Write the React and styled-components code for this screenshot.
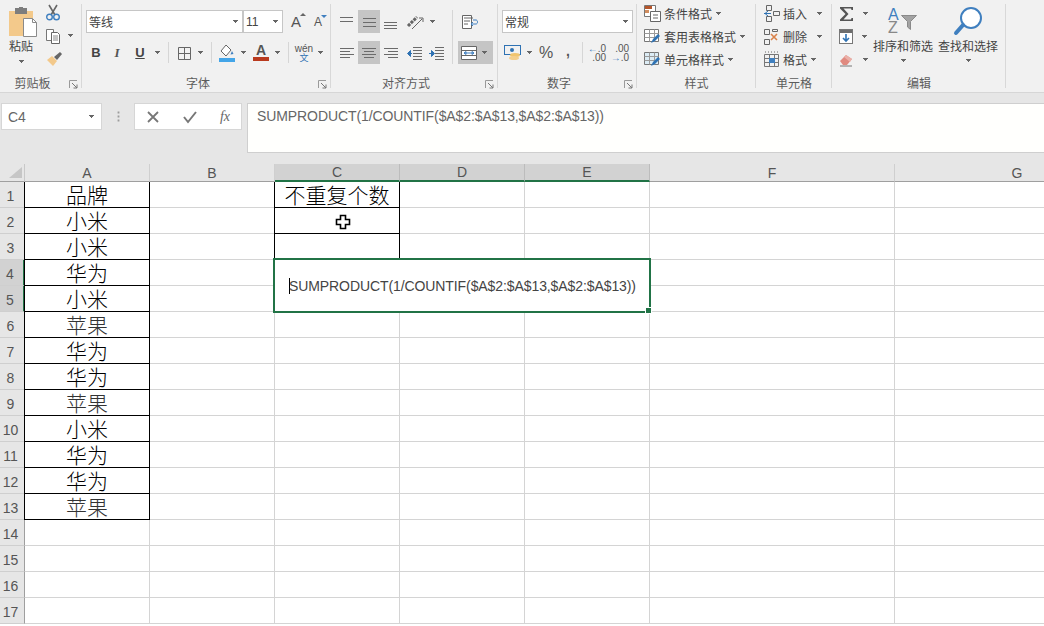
import styled, { createGlobalStyle } from "styled-components";

const Global = createGlobalStyle`
  html, body {
    margin: 0;
    padding: 0;
    overflow: hidden;
    background: #fff;
  }
  * { box-sizing: border-box; }
`;

const cjk = `"Noto Sans CJK SC", "Liberation Sans", sans-serif`;
const latin = `"Liberation Sans", "Noto Sans CJK SC", sans-serif`;

const Page = styled.div`
  width: 1044px;
  height: 626px;
  overflow: hidden;
  display: flex;
  flex-direction: column;
  font-family: ${cjk};
`;

const Ribbon = styled.div`
  display: flex;
  height: 93px;
  flex: none;
  background: #f1f1f1;
  border-bottom: 1px solid #d6d6d6;
`;

const Group = styled.section`
  position: relative;
  display: flex;
  flex-direction: column;
  width: ${(p) => p.$w}px;
  height: 90px;
  padding-left: ${(p) => p.$left ?? 4}px;
  &::after {
    content: "";
    position: absolute;
    right: 0;
    top: 4px;
    bottom: 2px;
    width: 1px;
    background: #d8d8d8;
  }
`;

const Body = styled.div`
  flex: 1;
  display: flex;
  padding-top: ${(p) => p.$top ?? 10}px;
`;

const Label = styled.div`
  height: 14px;
  margin-left: -${(p) => p.$left ?? 4}px;
  padding-right: ${(p) => (p.$launcher ? 17 : 0)}px;
  font-size: 12px;
  line-height: 14px;
  text-align: center;
  color: #5c5c5c;
`;

const Launcher = styled.svg`
  position: absolute;
  right: 4px;
  bottom: 1px;
  width: 9px;
  height: 9px;
`;

const Stack = styled.div`
  display: flex;
  flex-direction: column;
  gap: ${(p) => p.$gap ?? 8}px;
  ${(p) => (p.$w ? `width: ${p.$w}px;` : "")}
`;

const Row = styled.div`
  display: flex;
  align-items: center;
  height: 23px;
`;

const Combo = styled.div`
  display: flex;
  align-items: center;
  justify-content: space-between;
  width: ${(p) => p.$w}px;
  height: 23px;
  padding: 0 4px 0 2px;
  background: #fff;
  border: 1px solid #c6c6c6;
  font-size: 12px;
  color: #444;
  font-family: ${(p) => (p.$latin ? latin : cjk)};
`;

const Btn = styled.div`
  display: flex;
  align-items: center;
  justify-content: ${(p) => (p.$start ? "flex-start" : "center")};
  flex: none;
  width: ${(p) => p.$w}px;
  height: 23px;
  padding-left: ${(p) => (p.$start ? 3 : 0)}px;
  color: #555;
  background: ${(p) => (p.$on ? "#c5c5c5" : "transparent")};
`;

const BoldText = styled.span`
  font: bold 13px ${latin};
  color: #444;
`;

const ItalicText = styled.span`
  font: italic bold 13px "Liberation Serif", serif;
  color: #555;
`;

const UnderText = styled.span`
  font: bold 13px ${latin};
  color: #444;
  text-decoration: underline;
`;

const GrowA = styled.span`
  position: relative;
  font: ${(p) => p.$size}px ${latin};
  color: #555;
`;

const Tick = styled.i`
  position: absolute;
  top: 0;
  right: -5px;
  border-left: 3px solid transparent;
  border-right: 3px solid transparent;
  ${(p) => (p.$down ? "border-top: 3px solid #3f7fbf;" : "border-bottom: 3px solid #666;")}
`;

const ColorA = styled.span`
  display: flex;
  flex-direction: column;
  align-items: center;
  font: bold 14px/13px ${latin};
  color: #555;
  &::after {
    content: "";
    width: 16px;
    height: 4px;
    background: #b93a1e;
  }
`;

const Wen = styled.span`
  display: flex;
  flex-direction: column;
  align-items: center;
  font: 10px/9px ${latin};
  color: #555;
  & b {
    font: 9px/9px ${cjk};
    color: #2f72b3;
  }
`;

const Percent = styled.span`
  font: 16px ${latin};
  color: #555;
`;

const Comma = styled.span`
  font: bold 14px ${latin};
  color: #555;
  margin-top: -4px;
`;

const Decimal = styled.span`
  display: flex;
  flex-direction: column;
  align-items: flex-end;
  font: 10px/9px ${latin};
  color: #555;
  & em {
    font-style: normal;
    color: #3f7fbf;
  }
`;

const Sep = styled.div`
  flex: none;
  width: ${(p) => p.$w}px;
  height: ${(p) => p.$h ?? 21}px;
  background: linear-gradient(#d6d6d6, #d6d6d6) center / 1px 100% no-repeat;
`;

const Caret = styled.i`
  display: block;
  flex: none;
  width: ${(p) => p.$w ?? 10}px;
  height: 3px;
  background: linear-gradient(#666, #666) center top / 5px 1px no-repeat,
    linear-gradient(#666, #666) center 1px / 3px 1px no-repeat,
    linear-gradient(#666, #666) center 2px / 1px 1px no-repeat;
`;

const PasteBtn = styled.div`
  display: flex;
  flex-direction: column;
  align-items: center;
  width: 26px;
  margin-right: 11px;
  font-size: 12px;
  line-height: 18px;
  color: #444;
  & > svg {
    align-self: flex-start;
  }
  & > i {
    margin-top: 5px;
  }
`;

const SmallStack = styled.div`
  display: flex;
  flex-direction: column;
  margin-top: -6px;
`;

const ToolRow = styled.div`
  display: flex;
  align-items: center;
  height: 23px;
  font-size: 12px;
  color: #444;
  & > svg {
    flex: none;
    margin-right: 3px;
  }
  & > i {
    margin-left: ${(p) => p.$caret ?? 3}px;
  }
`;

const BigBtn = styled.div`
  display: flex;
  flex-direction: column;
  align-items: center;
  width: 60px;
  margin-top: 2px;
  margin-left: ${(p) => p.$gap ?? 0}px;
  font-size: 12px;
  line-height: 16px;
  color: #444;
  white-space: nowrap;
  & > svg {
    height: 32px;
    margin-bottom: 2px;
  }
  & > i {
    margin-top: 5px;
  }
`;

const FormulaBar = styled.div`
  display: flex;
  align-items: flex-start;
  flex: none;
  height: 71px;
  padding: 10px 0 0 1px;
  background: #e6e6e6;
`;

const NameBox = styled.div`
  display: flex;
  align-items: center;
  justify-content: space-between;
  width: 101px;
  height: 27px;
  padding: 0 6px;
  background: #fff;
  border: 1px solid #d6d6d6;
  font: 14px ${latin};
  color: #666;
`;

const Dots = styled.div`
  width: 32px;
  height: 27px;
  background: radial-gradient(circle, #9c9c9c 1px, transparent 1.2px) center / 3px 4px repeat-y;
  background-size: 3px 4px;
  background-clip: content-box;
  padding: 8px 0;
`;

const FxBox = styled.div`
  display: flex;
  align-items: center;
  justify-content: space-between;
  width: 108px;
  height: 27px;
  padding: 0 11px;
  margin-right: 5px;
  background: #fff;
  border: 1px solid #d6d6d6;
`;

const FxText = styled.span`
  font: italic 14px "Liberation Serif", serif;
  color: #666;
`;

const FormulaInput = styled.div`
  flex: 1;
  height: 50px;
  padding: 3px 9px;
  background: #fffffd;
  border: 1px solid #cfcfcf;
  border-right: none;
  font: 14px/18px ${latin};
  letter-spacing: -0.09px;
  color: #666;
`;

const Sheet = styled.div`
  position: relative;
  flex: 1;
  display: grid;
  grid-template-columns: 25px 125px 125px 125px 125px 125px 245px 245px;
  grid-template-rows: 18px repeat(17, 26px);
  background: #fff;
`;

const Corner = styled.div`
  display: flex;
  align-items: flex-end;
  justify-content: flex-end;
  padding: 0 2px 3px 0;
  background: #e6e6e6;
  border-bottom: 1px solid #9f9f9f;
  border-right: 1px solid #c8c8c8;
`;

const ColHead = styled.div`
  display: flex;
  align-items: center;
  justify-content: center;
  background: ${(p) => (p.$on ? "#d2d2d2" : "#e6e6e6")};
  border-right: 1px solid ${(p) => (p.$on ? "#bcbcbc" : "#cfcfcf")};
  border-bottom: ${(p) => (p.$on ? "2px solid #217346" : "1px solid #9f9f9f")};
  font: 14px ${latin};
  color: #555;
`;

const RowHead = styled.div`
  display: flex;
  align-items: center;
  justify-content: center;
  padding: 2px 3px 0 0;
  background: ${(p) => (p.$on ? "#d2d2d2" : "#e6e6e6")};
  border-right: ${(p) => (p.$on ? "2px solid #217346" : "1px solid #9f9f9f")};
  border-bottom: 1px solid #cfcfcf;
  font: 14px ${latin};
  color: #555;
`;

const Cell = styled.div`
  display: flex;
  align-items: center;
  justify-content: center;
  padding-bottom: 2px;
  border-right: 1px solid ${(p) => (p.$box ? "#000" : "#d4d4d4")};
  border-bottom: 1px solid ${(p) => (p.$box ? "#000" : "#d4d4d4")};
  box-shadow: ${(p) => (p.$box ? "-1px 0 0 #000" : "none")};
  font-size: 21px;
  font-weight: 300;
  line-height: 24px;
  color: ${(p) => p.$color ?? "#000"};
  white-space: nowrap;
`;

const Editor = styled.div`
  position: absolute;
  left: 273px;
  top: 94px;
  width: 378px;
  height: 55px;
  display: flex;
  align-items: center;
  padding-left: 14px;
  background: #fff;
  border: 2px solid #217346;
  font: 14px ${latin};
  letter-spacing: -0.09px;
  color: #444;
  &::after {
    content: "";
    position: absolute;
    right: -3px;
    bottom: -3px;
    width: 5px;
    height: 5px;
    background: #217346;
    border: 1px solid #fff;
  }
`;

const TextCaret = styled.span`
  width: 1px;
  height: 16px;
  margin-right: -1px;
  background: #000;
`;

const Pointer = styled.svg`
  position: absolute;
  left: 335px;
  top: 50px;
  width: 16px;
  height: 16px;
`;

const Svg = ({ w = 16, h = 16, children }) => (
  <svg width={w} height={h} viewBox={`0 0 ${w} ${h}`} fill="none">
    {children}
  </svg>
);

const Paste = () => (
  <Svg w={30} h={30}>
    <rect x="1" y="4" width="24" height="25" fill="#f3c98b" />
    <rect x="7" y="1" width="12" height="6" fill="#7d7d7d" />
    <rect x="11" y="0" width="4" height="3" fill="#7d7d7d" />
    <path d="M15.5 11.5h9l4 4v14h-13z" fill="#fff" stroke="#8a8a8a" />
    <path d="M24.5 11.5v4h4" stroke="#8a8a8a" />
  </Svg>
);

const Scissors = () => (
  <Svg w={16} h={17}>
    <path d="M4 1l6 10M12 1L6 11" stroke="#666" strokeWidth="1.6" />
    <circle cx="4.5" cy="13" r="2.8" stroke="#3f7fbf" strokeWidth="1.4" />
    <circle cx="11.5" cy="13" r="2.8" stroke="#3f7fbf" strokeWidth="1.4" />
  </Svg>
);

const Copy = () => (
  <Svg>
    <path d="M1.5 1.5h7v11h-7z" fill="#fff" stroke="#777" />
    <path d="M6.5 4.5h6l2 2v9h-8z" fill="#fff" stroke="#666" />
    <path d="M8 8h5M8 10h5M8 12h5" stroke="#888" />
  </Svg>
);

const Brush = () => (
  <Svg w={18} h={16}>
    <path d="M2 9l5-4 5 5-4 5z" fill="#f3c98b" />
    <path d="M9 6l6-5 2 2-5 6z" fill="#666" />
  </Svg>
);

const Borders = () => (
  <Svg>
    <path d="M1.5 2.5h12v12h-12zM7.5 2.5v12M1.5 8.5h12" stroke="#666" />
  </Svg>
);

const Fill = () => (
  <Svg w={18} h={18}>
    <path d="M8 1l5 5-5 6-5-5z" fill="#fff" stroke="#666" />
    <path d="M14 7l1.5 3-3 .5z" fill="#3f7fbf" />
    <rect x="1" y="14" width="16" height="4" fill="#43a5e8" />
  </Svg>
);

const Lines = ({ rows }) => (
  <Svg>
    {rows.map(([x, y, len]) => (
      <path key={y} d={`M${x} ${y + 0.5}h${len}`} stroke="#6b6b6b" />
    ))}
  </Svg>
);

const Orient = () => (
  <Svg w={18} h={16}>
    <path d="M2 12L11 3" stroke="#666" strokeWidth="3" strokeDasharray="3 1" />
    <path d="M6 15L16 5M13 4h4v4" stroke="#666" />
  </Svg>
);

const Indent = ({ flip }) => (
  <Svg>
    <path d="M7 2.5h9M7 5.5h9M7 8.5h9M7 11.5h9M7 14.5h9" stroke="#6b6b6b" />
    <path d={flip ? "M1 8.5h3M3.5 5.5l3 3-3 3z" : "M2 8.5h4M4.5 5.5l-3 3 3 3z"} fill="#2f72b3" stroke="#2f72b3" />
  </Svg>
);

const Wrap = () => (
  <Svg w={18} h={16}>
    <path d="M1.5 1.5h9v13h-9z" stroke="#666" fill="#fff" />
    <path d="M3 4h9M3 7h6M3 10h4" stroke="#666" />
    <path d="M10 10h5c2 0 2-4 0-4h-3M12 8l-2 2 2 2" stroke="#3f7fbf" />
  </Svg>
);

const Merge = () => (
  <Svg>
    <path d="M.5 1.5h15v13H.5z" fill="#fff" stroke="#666" />
    <path d="M.5 5.5h15M.5 10.5h15" stroke="#666" />
    <path d="M3 8h10M3 8l2-1.5v3zM13 8l-2-1.5v3z" stroke="#3f7fbf" />
  </Svg>
);

const Money = () => (
  <Svg w={18} h={18}>
    <rect x="0.5" y="1.5" width="16" height="9" stroke="#2f72b3" />
    <circle cx="8" cy="6" r="2" fill="#2f72b3" />
    <ellipse cx="11" cy="11" rx="5" ry="2" fill="#f0c46f" />
    <ellipse cx="10" cy="14" rx="5" ry="2" fill="#f3cf8e" />
  </Svg>
);

const CondFormat = () => (
  <Svg w={17} h={17}>
    <path d="M.5.5h11v11H.5z" fill="#fff" stroke="#777" />
    <rect x="1" y="1" width="7" height="3" fill="#b5562b" />
    <rect x="1" y="5" width="4" height="3" fill="#d18d5e" />
    <path d="M6.5 6.5h10v10h-10z" fill="#fff" stroke="#666" />
    <path d="M9 10h5M9 13h5" stroke="#666" />
  </Svg>
);

const TableFormat = ({ fill }) => (
  <Svg w={17} h={17}>
    <path d="M.5 1.5h14v12H.5z" fill={fill} stroke="#777" />
    <path d="M.5 5.5h14M.5 9.5h14M5.5 1.5v12M10.5 1.5v12" stroke="#9a9a9a" />
    <path d="M7 15l2-4 5-5 2 2-5 5z" fill="#2f72b3" />
  </Svg>
);

const CellInsert = () => (
  <Svg w={17} h={17}>
    <path d="M3.5.5h5v5h-5zM10.5 6.5h6v4h-6zM3.5 11.5h5v5h-5z" stroke="#666" />
    <path d="M1 8.5h7M5 6l-3 2.5L5 11" stroke="#2f72b3" />
  </Svg>
);

const CellDelete = () => (
  <Svg w={17} h={17}>
    <path d="M1.5 1.5h5v5h-5zM1.5 11.5h5v5h-5zM9.5 1.5h5v2h-5z" stroke="#666" />
    <path d="M8 6l6 6M14 6l-6 6" stroke="#d9824a" strokeWidth="1.6" />
  </Svg>
);

const CellFormat = () => (
  <Svg w={17} h={17}>
    <path d="M1.5 3.5h14v12h-14zM1.5 7.5h14M1.5 11.5h14M6.5 3.5v12M11.5 3.5v12" stroke="#777" />
    <rect x="6" y="7" width="6" height="5" fill="#3f7fbf" />
    <path d="M2 1h1M5 1h1M8 1h1M11 1h1M14 1h1" stroke="#666" />
  </Svg>
);

const Sigma = () => (
  <Svg w={16} h={16}>
    <path d="M1 1h13v3h-1.5l-.5-1.5H4.5l5 5.5-5 5.5H12l.5-1.5H14v3H1v-1.5L6.5 8 1 2.5z" fill="#555" />
  </Svg>
);

const FillDown = () => (
  <Svg w={15} h={16}>
    <rect x="0.5" y="0.5" width="13" height="14" fill="#fff" stroke="#777" />
    <rect x="1" y="1" width="12" height="3" fill="#6d6d6d" />
    <path d="M7 5v7M4 9l3 3 3-3" stroke="#2f72b3" strokeWidth="1.6" />
  </Svg>
);

const Eraser = () => (
  <Svg w={16} h={15}>
    <path d="M1 9l6-6 6 4-5 6H4z" fill="#e08a80" />
    <path d="M7 3l6 4-2 3-6-5z" fill="#eab0a8" />
    <path d="M1 14h12" stroke="#777" />
  </Svg>
);

const Sort = () => (
  <svg width="32" height="32" viewBox="0 0 32 32" fill="none">
    <text x="1" y="16" fontFamily="Liberation Sans" fontSize="16" fill="#3f7fbf">A</text>
    <text x="1" y="29" fontFamily="Liberation Sans" fontSize="16" fill="#888">Z</text>
    <path d="M14.5 11.5h15l-6 6v8l-3-2.5v-5.5z" fill="#a3a3a3" stroke="#8a8a8a" />
  </svg>
);

const Find = () => (
  <svg width="30" height="32" viewBox="0 0 30 32" fill="none">
    <circle cx="18" cy="14" r="10" fill="#fff" stroke="#3f7fbf" strokeWidth="2" />
    <path d="M10 21L3 29" stroke="#3f7fbf" strokeWidth="4" strokeLinecap="round" />
  </svg>
);

const brandColumn = ["品牌", "小米", "小米", "华为", "小米", "苹果", "华为", "华为", "苹果", "小米", "华为", "华为", "苹果"];
const columns = ["A", "B", "C", "D", "E", "F", "G"];
const rowNumbers = Array.from({ length: 17 }, (_, i) => i + 1);
const formula = "SUMPRODUCT(1/COUNTIF($A$2:$A$13,$A$2:$A$13))";

const launcher = (
  <Launcher viewBox="0 0 9 9" fill="none">
    <path d="M.5 8V.5H8" stroke="#9a9a9a" />
    <path d="M3 3l5 5M8 4.5V8H4.5" stroke="#777" />
  </Launcher>
);

const App = () => {
  return (
    <Page>
      <Global />
      <Ribbon>
        <Group $w={82} $left={8}>
          <Body $top={7}>
            <PasteBtn>
              <Paste />
              <span>粘贴</span>
              <Caret $w={8} />
            </PasteBtn>
            <SmallStack>
              <ToolRow>
                <Scissors />
              </ToolRow>
              <ToolRow $caret={3}>
                <Copy />
                <Caret $w={6} />
              </ToolRow>
              <ToolRow>
                <Brush />
              </ToolRow>
            </SmallStack>
          </Body>
          <Label $launcher $left={8}>剪贴板</Label>
          {launcher}
        </Group>

        <Group $w={249}>
          <Body>
            <Stack>
              <Row>
                <Combo $w={157}>
                  等线
                  <Caret $w={6} />
                </Combo>
                <Combo $w={40} $latin>
                  11
                  <Caret $w={6} />
                </Combo>
                <Btn $w={26}>
                  <GrowA $size={15}>
                    A
                    <Tick />
                  </GrowA>
                </Btn>
                <Btn $w={18}>
                  <GrowA $size={12}>
                    A
                    <Tick $down />
                  </GrowA>
                </Btn>
              </Row>
              <Row>
                <Btn $w={20}><BoldText>B</BoldText></Btn>
                <Btn $w={22}><ItalicText>I</ItalicText></Btn>
                <Btn $w={24}><UnderText>U</UnderText></Btn>
                <Caret />
                <Sep $w={12} />
                <Btn $w={21}><Borders /></Btn>
                <Caret />
                <Sep $w={12} />
                <Btn $w={20}><Fill /></Btn>
                <Caret $w={12} />
                <Btn $w={24}><ColorA>A</ColorA></Btn>
                <Caret $w={8} />
                <Sep $w={14} />
                <Btn $w={18}><Wen>wén<b>文</b></Wen></Btn>
                <Caret $w={14} />
              </Row>
            </Stack>
          </Body>
          <Label $launcher>字体</Label>
          {launcher}
        </Group>

        <Group $w={167}>
          <Body>
            <Stack>
              <Row>
                <Btn $w={23}><Lines rows={[[1, 3, 13], [1, 7, 13]]} /></Btn>
                <Btn $w={22} $on><Lines rows={[[2, 4, 13], [2, 8, 13], [2, 12, 13]]} /></Btn>
                <Btn $w={22}><Lines rows={[[1, 8, 13], [1, 11, 13], [1, 14, 13]]} /></Btn>
                <Btn $w={26}><Orient /></Btn>
                <Caret $w={8} />
              </Row>
              <Row>
                <Btn $w={23}><Lines rows={[[1, 3, 14], [1, 6, 10], [1, 9, 14], [1, 12, 10]]} /></Btn>
                <Btn $w={22} $on><Lines rows={[[1, 3, 14], [3, 6, 10], [1, 9, 14], [3, 12, 10]]} /></Btn>
                <Btn $w={22}><Lines rows={[[1, 3, 14], [5, 6, 10], [1, 9, 14], [5, 12, 10]]} /></Btn>
                <Btn $w={23}><Indent /></Btn>
                <Btn $w={22}><Indent flip /></Btn>
              </Row>
            </Stack>
            <Sep $w={11} $h={54} />
            <Stack>
              <Row>
                <Btn $w={24}><Wrap /></Btn>
              </Row>
              <Row>
                <Btn $w={35} $on $start>
                  <Merge />
                  <Caret $w={15} />
                </Btn>
              </Row>
            </Stack>
          </Body>
          <Label $launcher>对齐方式</Label>
          {launcher}
        </Group>

        <Group $w={139}>
          <Body>
            <Stack>
              <Combo $w={131}>
                常规
                <Caret $w={6} />
              </Combo>
              <Row>
                <Btn $w={22}><Money /></Btn>
                <Caret />
                <Btn $w={24}><Percent>%</Percent></Btn>
                <Btn $w={20}><Comma>,</Comma></Btn>
                <Sep $w={8} />
                <Btn $w={22}><Decimal><span><em>←</em>.0</span><span>.00</span></Decimal></Btn>
                <Btn $w={24}><Decimal><span>.00</span><span><em>→</em>.0</span></Decimal></Btn>
              </Row>
            </Stack>
          </Body>
          <Label $launcher>数字</Label>
          {launcher}
        </Group>

        <Group $w={119} $left={7}>
          <Body $top={2}>
            <Stack $gap={0}>
              <ToolRow $caret={3}><CondFormat />条件格式<Caret $w={6} /></ToolRow>
              <ToolRow $caret={3}><TableFormat fill="#fff" />套用表格格式<Caret $w={6} /></ToolRow>
              <ToolRow $caret={3}><TableFormat fill="#dcecf5" />单元格样式<Caret $w={6} /></ToolRow>
            </Stack>
          </Body>
          <Label $left={7}>样式</Label>
        </Group>

        <Group $w={76} $left={7}>
          <Body $top={2}>
            <Stack $gap={0}>
              <ToolRow $caret={9}><CellInsert />插入<Caret $w={6} /></ToolRow>
              <ToolRow $caret={9}><CellDelete />删除<Caret $w={6} /></ToolRow>
              <ToolRow $caret={3}><CellFormat />格式<Caret $w={6} /></ToolRow>
            </Stack>
          </Body>
          <Label $left={7}>单元格</Label>
        </Group>

        <Group $w={174} $left={7}>
          <Body $top={2}>
            <Stack $gap={0} $w={34}>
              <ToolRow $caret={4}><Sigma /><Caret $w={6} /></ToolRow>
              <ToolRow $caret={4}><FillDown /><Caret $w={6} /></ToolRow>
              <ToolRow $caret={4}><Eraser /><Caret $w={6} /></ToolRow>
            </Stack>
            <BigBtn>
              <Sort />
              排序和筛选
              <Caret $w={6} />
            </BigBtn>
            <BigBtn $gap={5}>
              <Find />
              查找和选择
              <Caret $w={6} />
            </BigBtn>
          </Body>
          <Label $left={7}>编辑</Label>
        </Group>
      </Ribbon>

      <FormulaBar>
        <NameBox>
          C4
          <Caret $w={7} />
        </NameBox>
        <Dots />
        <FxBox>
          <Svg w={14} h={14}><path d="M2 2l10 10M12 2L2 12" stroke="#777" strokeWidth="1.8" /></Svg>
          <Svg w={16} h={14}><path d="M2 7l4 5 8-10" stroke="#777" strokeWidth="2" /></Svg>
          <FxText>fx</FxText>
        </FxBox>
        <FormulaInput>{formula}</FormulaInput>
      </FormulaBar>

      <Sheet>
        <Corner>
          <svg width="13" height="11" viewBox="0 0 13 11"><path d="M13 0v11H0z" fill="#c6c6c6" /></svg>
        </Corner>
        {columns.map((c) => (
          <ColHead key={c} $on={c === "C" || c === "D" || c === "E"}>{c}</ColHead>
        ))}
        {rowNumbers.map((n) => {
          const brand = brandColumn[n - 1];
          const inC = n <= 3;
          return [
            <RowHead key={`h${n}`} $on={n === 4 || n === 5}>{n}</RowHead>,
            ...columns.map((c) => {
              if (c === "A") {
                return (
                  <Cell key={c + n} $box={Boolean(brand)} $color={brand === "苹果" ? "#333" : undefined}>
                    {brand}
                  </Cell>
                );
              }
              if (c === "C") {
                return <Cell key={c + n} $box={inC}>{n === 1 ? "不重复个数" : null}</Cell>;
              }
              return <Cell key={c + n} />;
            }),
          ];
        })}
        <Pointer viewBox="0 0 16 16">
          <path d="M5.5 1.5h5v4h4v5h-4v4h-5v-4h-4v-5h4z" fill="#fff" stroke="#000" strokeWidth="1.6" />
        </Pointer>
        <Editor>
          <TextCaret />
          {formula}
        </Editor>
      </Sheet>
    </Page>
  );
};

export default App;
